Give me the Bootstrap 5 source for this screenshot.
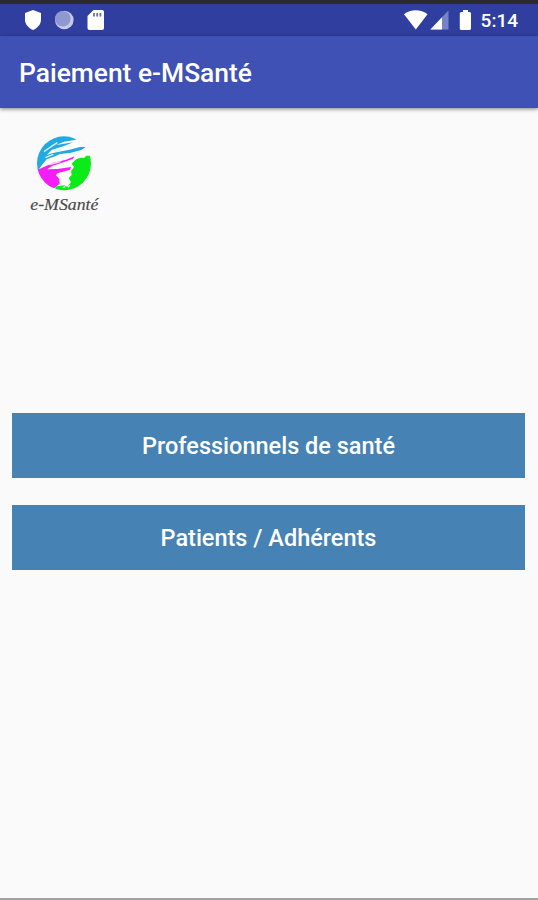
<!DOCTYPE html>
<html lang="fr">
<head>
<meta charset="utf-8">
<meta name="viewport" content="width=device-width, initial-scale=1">
<title>Paiement e-MSanté</title>
<link href="https://cdn.jsdelivr.net/npm/bootstrap@5.3.0/dist/css/bootstrap.min.css" rel="stylesheet">
<style>
body{font-family:Roboto,sans-serif;background:#fafafa}
svg{display:block;flex-shrink:0}
.screen{height:900px;border-top:4px solid #2b2b2e;border-bottom:2px solid #a2a2a2}
.status-bar{height:32px;background:#303f9f;padding-left:24px;padding-right:20px}
.clock{font-size:19px;font-weight:500;line-height:32px;margin-left:9px;padding-top:2px}
.app-bar{height:72px;background:#3f51b5;padding:0 19px;box-shadow:0 1px 4px rgba(0,0,0,.5)}
.app-title{font-size:26.4px;font-weight:500;line-height:32px;padding-top:2px}
.brand-area{height:305px;padding:17px 20px 0}
.choices{padding:0 13px 0 12px;gap:27px}
.choice{--bs-btn-bg:#4682b4;--bs-btn-color:#fff;--bs-btn-hover-bg:#3c76a6;--bs-btn-hover-color:#fff;height:65px;font-size:23.500px;font-weight:500;border:0;padding:3px 0 0}
</style>
<script src="https://cdn.jsdelivr.net/npm/bootstrap@5.3.0/dist/js/bootstrap.bundle.min.js"></script>
</head>
<body>
<div class="screen d-flex flex-column">
  <header>
    <div class="status-bar d-flex align-items-center justify-content-between text-white">
      <svg width="84" height="24" viewBox="0 0 84 24">
        <path d="M9 2l8 3v6.500c0 5-3.400 8.400-8 10.500C4.400 19.900 1 16.500 1 11.500V5z" fill="#fff"/>
        <circle cx="40.300" cy="12" r="9.300" fill="#c3caea"/>
        <circle cx="38.800" cy="10.800" r="7.800" fill="#8f98cf"/>
        <path d="M69.500 2H78a2 2 0 0 1 2 2v16a2 2 0 0 1-2 2H65.500a2 2 0 0 1-2-2V8z" fill="#fff"/>
        <path d="M70 5v3.500M73.200 5v3.500M76.400 5v3.500" stroke="#6570b5" stroke-width="1.800"/>
      </svg>
      <div class="d-flex align-items-center">
        <svg width="68" height="24" viewBox="0 0 68 24">
          <path d="M0 6.200C6.500.9 17 .9 23.500 6.200L11.800 21.500z" fill="#fff"/>
          <path d="M44.500 2.500v19H26z" fill="#7783c8"/>
          <path d="M38 9.200v12.300H26.500z" fill="#fff"/>
          <path d="M59 2h5v2h1.500q1.500 0 1.500 1.500v15q0 1.500-1.500 1.500h-8.200q-1.500 0-1.500-1.500v-15Q55.800 4 57.300 4H59z" fill="#fff"/>
        </svg>
        <span class="clock">5:14</span>
      </div>
    </div>
    <div class="app-bar d-flex align-items-center">
      <h1 class="app-title text-white mb-0">Paiement e-MSanté</h1>
    </div>
  </header>
  <main>
    <div class="brand-area">
      <svg width="90" height="100" viewBox="0 0 270 300" role="img" aria-label="e-MSanté">
        <defs><clipPath id="globe"><circle cx="132" cy="115" r="81"/></clipPath></defs>
        <g clip-path="url(#globe)">
          <circle cx="132" cy="115" r="81" fill="#fff"/>
          <path d="M45 136V30H162L168 44 132 50 108 60 146 54 160 52 130 64 96 74 80 90 98 84 148 74 180 66 198 65 184 75 150 84 120 87 102 95 80 103 66 120 55 135z" fill="#21aae1"/>
          <path d="M72 80l24-17M76 98l24-10M90 67l22-14M106 80l20-6" stroke="#d8f2fb" stroke-width="4"/>
          <path d="M45 136L58 132 100 113 138 104 164 94 158 102 126 113 96 123 82 133 112 132 154 126 150 134 112 145 108 151 118 162 119 176 104 190 72 182 48 150z" fill="#f51df5"/>
          <path d="M88 119l34-9" stroke="#ffd9ff" stroke-width="4"/>
          <path d="M168 103L181 98 194 98 198 92H230V210H94L110 184 132 181 142 185 153 172 146 160 155 150 153 139 162 126 155 116z" fill="#0beb18"/>
          <path d="M128 188l8-3M144 187l5-6" stroke="#fff" stroke-width="4"/>
        </g>
        <text x="31" y="256" textLength="204" lengthAdjust="spacingAndGlyphs" font-family="Liberation Serif, serif" font-size="50" font-style="italic" fill="#4a4a4a" stroke="#4a4a4a" stroke-width=".5">e-MSanté</text>
      </svg>
    </div>
    <div class="choices d-grid">
      <button type="button" class="btn choice rounded-0">Professionnels de santé</button>
      <button type="button" class="btn choice rounded-0">Patients / Adhérents</button>
    </div>
  </main>
</div>
</body>
</html>
